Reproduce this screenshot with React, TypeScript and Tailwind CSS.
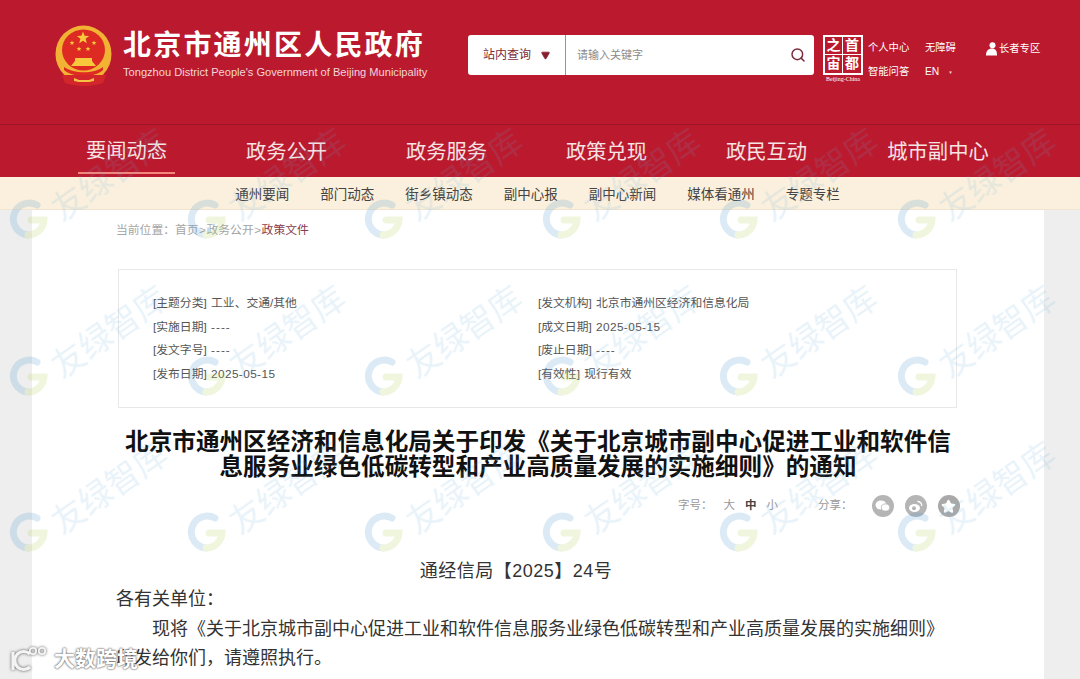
import { Search, Triangle, Star } from "lucide-react";

const FONT = "font-['Liberation_Sans','Noto_Sans_CJK_SC',sans-serif]";

const mainNav = ["要闻动态", "政务公开", "政务服务", "政策兑现", "政民互动", "城市副中心"];
const subNav = ["通州要闻", "部门动态", "街乡镇动态", "副中心报", "副中心新闻", "媒体看通州", "专题专栏"];

const metaLeft = [
  ["[主题分类]", "工业、交通/其他"],
  ["[实施日期]", "----"],
  ["[发文字号]", "----"],
  ["[发布日期]", "2025-05-15"],
];
const metaRight = [
  ["[发文机构]", "北京市通州区经济和信息化局"],
  ["[成文日期]", "2025-05-15"],
  ["[废止日期]", "----"],
  ["[有效性]", "现行有效"],
];

const markCols = [7, 185, 362, 540, 717, 895];
const markRows = [198, 355, 511];

function SmallStar({ x, y, r = 2.6 }: { x: number; y: number; r?: number }) {
  const pts = Array.from({ length: 10 }, (_, i) => {
    const a = (Math.PI / 5) * i - Math.PI / 2;
    const d = i % 2 === 0 ? r : r * 0.42;
    return `${x + d * Math.cos(a)},${y + d * Math.sin(a)}`;
  }).join(" ");
  return <polygon points={pts} fill="#f8c83c" />;
}

function Emblem() {
  return (
    <svg width="58" height="62" viewBox="0 0 58 62">
      <path d="M8 46h42l-3 12q-18 6-36 0z" fill="#d3262a" />
      <ellipse cx="28.5" cy="29" rx="28" ry="28.5" fill="#f2b233" />
      <ellipse cx="28.5" cy="25" rx="21.5" ry="20.5" fill="#dd2a22" />
      <SmallStar x={28} y={13} r={6.5} />
      <SmallStar x={17} y={18} />
      <SmallStar x={39} y={18} />
      <SmallStar x={24} y={24} />
      <SmallStar x={33} y={24} />
      <path d="M20 33h17v3l4 5H16l4-5z" fill="#f8c83c" />
      <path d="M9 42c10 7 30 7 39 0v3c-9 8-29 8-39 0z" fill="#dd2a22" />
      <path d="M7 50h44l-3 8q-19 6-38 0z" fill="#d3262a" />
      <path d="M19 53l5 2h10l5-2v3l-5 1H24l-5-1z" fill="#f6c244" />
    </svg>
  );
}

function Watermark({ x, y }: { x: number; y: number }) {
  return (
    <div className="absolute" style={{ left: x, top: y }}>
      <svg width="42" height="42" viewBox="0 0 42 42" fill="none" className="opacity-20 blur-[0.5px]">
        <path d="M30 7A16 16 0 1 0 21 37" stroke="#4f9cd0" strokeWidth="7" strokeLinecap="round" />
        <path d="M21 37A16 16 0 0 0 37 22H24" stroke="#b7d35c" strokeWidth="7" strokeLinecap="round" />
      </svg>
      <span className="absolute left-[36px] top-[-45px] w-[140px] origin-center -rotate-[35deg] text-[33px] leading-[40px] whitespace-nowrap text-[#5fa8d8] opacity-[0.14] blur-[0.3px]">
        友绿智库
      </span>
    </div>
  );
}

function MetaColumn({ rows }: { rows: string[][] }) {
  return (
    <div className="flex flex-col gap-[5.5px]">
      {rows.map(([label, value]) => (
        <p key={label} className="text-[11.8px] leading-[18px] text-[#555]">
          {label}{" "}
          <span className={`ml-[1px] ${value === "----" ? "tracking-[1px]" : /^\d/.test(value) ? "tracking-[0.4px]" : ""}`}>
            {value}
          </span>
        </p>
      ))}
    </div>
  );
}

export default function App() {
  return (
    <div className={`${FONT} relative h-[679px] w-[1080px] overflow-hidden bg-[#eeeeee]`}>
      <header className="flex h-[125px] items-start border-b border-[#9c1526] bg-[#bb1a2e]">
        <div className="ml-[55px] mt-[25px]">
          <Emblem />
        </div>
        <div className="ml-[10px] mt-[29px] w-[320px] text-white">
          <h1 className="text-[28px] font-bold leading-[34px] tracking-[2.2px] whitespace-nowrap">北京市通州区人民政府</h1>
          <p className="mt-[2px] text-[11.1px] leading-[14px] whitespace-nowrap text-[#f2d5d8]">
            Tongzhou District People's Government of Beijing Municipality
          </p>
        </div>
        <div className="ml-[25px] mt-[35px] flex h-[40px] w-[346px] items-center rounded-[3px] bg-white">
          <div className="flex h-full w-[98px] items-center border-r border-[#a98a90] pl-[15px]">
            <span className="text-[12px] text-[#7a2a3a]">站内查询</span>
            <Triangle className="ml-[10px] size-[9px] rotate-180 fill-[#8a1c30] text-[#8a1c30]" />
          </div>
          <span className="ml-[11px] flex-1 text-[11px] text-[#8b8b8b]">请输入关键字</span>
          <Search className="mr-[8px] size-[16px] text-[#7a2a3a]" strokeWidth={2.2} />
        </div>
        <div className="ml-[9px] mt-[35px] flex w-[40px] flex-col items-center">
          <div className="grid size-[40px] grid-cols-2 grid-rows-2 border-2 border-white font-['Liberation_Serif','Noto_Sans_CJK_SC',serif] text-[14px] leading-none font-bold text-white">
            <span className="flex items-center justify-center border-r border-b border-white">之</span>
            <span className="flex items-center justify-center border-b border-white">首</span>
            <span className="flex items-center justify-center border-r border-white">宙</span>
            <span className="flex items-center justify-center">都</span>
          </div>
          <span className="font-['Liberation_Serif',serif] text-[6px] leading-[8px] whitespace-nowrap text-white">Beijing-China</span>
        </div>
        <div className="ml-[5px] mt-[42px] grid grid-cols-[57px_60px_auto] gap-y-[10px] text-[10.3px] leading-[12px] text-white">
          <span>个人中心</span>
          <span>无障碍</span>
          <span className="flex items-center gap-[1px]">
            <svg width="13" height="14" viewBox="0 0 13 14" fill="white">
              <circle cx="7.5" cy="3.2" r="3" />
              <path d="M1 13.5c0-5 2.500-7 6-7s5 2 5 7z" />
            </svg>
            长者专区
          </span>
          <span>智能问答</span>
          <span className="flex items-center gap-[10px]">
            EN <Triangle className="size-[3px] rotate-180 fill-[#ecc] text-[#ecc]" />
          </span>
        </div>
      </header>

      <nav className="flex h-[52px] items-start gap-[63px] bg-[#bb1a2e] pl-[78px] text-[20.3px] text-[#f6e3e3]">
        {mainNav.map((item, i) => (
          <div
            key={item}
            className={`flex h-[49px] items-center justify-center pt-[5px] ${
              i === 0 ? "w-[97px] border-b-2 border-[#f4877a]" : i === 5 ? "w-[120px]" : "w-[97px]"
            }`}
          >
            {item}
          </div>
        ))}
      </nav>

      <div className="flex h-[33px] items-center justify-center gap-[31px] border-b border-[#f1e5d0] bg-[#fbf0dd] pr-[5px] pt-[5px] text-[13.5px] text-[#444]">
        {subNav.map((item) => (
          <span key={item}>{item}</span>
        ))}
      </div>

      <main className="ml-[32px] h-[469px] w-[1012px] bg-white">
        <div className="pl-[84px] pt-[12px] text-[11.8px] leading-[16px] text-[#a5a5a5]">
          当前位置：首页<span className="px-[0.5px]">&gt;</span>政务公开<span className="px-[0.5px]">&gt;</span>
          <span className="text-[#8a3a4d]">政策文件</span>
        </div>

        <section className="ml-[86px] mt-[31px] flex h-[139px] w-[839px] border border-[#e8e8e8] pl-[34px] pt-[24px]">
          <div className="w-[385px]">
            <MetaColumn rows={metaLeft} />
          </div>
          <MetaColumn rows={metaRight} />
        </section>

        <h2 className="mx-auto mt-[22px] w-[860px] text-center text-[23.6px] leading-[25px] font-bold text-[#111]">
          北京市通州区经济和信息化局关于印发《关于北京城市副中心促进工业和软件信
          <br />
          息服务业绿色低碳转型和产业高质量发展的实施细则》的通知
        </h2>

        <div className="mt-[13px] flex h-[26px] items-center pl-[646px] text-[11.5px] text-[#999]">
          <span>字号：</span>
          <span className="ml-[11px]">大</span>
          <span className="ml-[10px] font-bold text-[#444]">中</span>
          <span className="ml-[10px]">小</span>
          <span className="ml-[40px]">分享：</span>
          <div className="ml-[19px] flex gap-[11px]">
            <span className="flex size-[22px] items-center justify-center rounded-full bg-[#b5b5b5]">
              <svg width="15" height="12" viewBox="0 0 15 12" fill="white">
                <ellipse cx="6" cy="5" rx="5.5" ry="4.6" />
                <ellipse cx="10.5" cy="7.500" rx="4.2" ry="3.600" stroke="#b5b5b5" strokeWidth="0.8" />
              </svg>
            </span>
            <span className="flex size-[22px] items-center justify-center rounded-full bg-[#b5b5b5]">
              <svg width="15" height="13" viewBox="0 0 15 13" fill="none">
                <ellipse cx="6.5" cy="8" rx="5.5" ry="4" fill="white" />
                <circle cx="6" cy="8.3" r="2" fill="#b5b5b5" />
                <path d="M9.5 1.5a4 4 0 0 1 4.200 4.500" stroke="white" strokeWidth="1.3" />
              </svg>
            </span>
            <span className="flex size-[22px] items-center justify-center rounded-full bg-[#a9a9a9]">
              <Star className="size-[15px] fill-white text-white" />
            </span>
          </div>
        </div>

        <div className="mt-[37px] w-[800px] ml-[84px] text-[18px] leading-[30px] text-[#333]">
          <p className="text-center tracking-[0.5px]">通经信局【2025】24号</p>
          <p className="-mt-[2px]">各有关单位：</p>
          <p className="whitespace-nowrap pl-[36px]">现将《关于北京城市副中心促进工业和软件信息服务业绿色低碳转型和产业高质量发展的实施细则》</p>
          <p className="-mt-[1px]">印发给你们，请遵照执行。</p>
        </div>
      </main>

      {markRows.map((y) =>
        markCols.map((x) => <Watermark key={`${x}-${y}`} x={x} y={y} />)
      )}

      <div className="absolute bottom-[7px] left-[10px] flex items-center gap-[6px] text-white">
        <svg width="38" height="26" viewBox="0 0 38 26" fill="none" stroke="#f4f4f4" strokeWidth="3.2" className="drop-shadow-[0_0_1.5px_#555]">
          <path d="M3 6v18" />
          <path d="M20 8a9 9 0 1 0 0 13" />
          <circle cx="23" cy="5" r="3.200" strokeWidth="1.8" />
          <circle cx="32" cy="5" r="3.200" strokeWidth="1.8" />
        </svg>
        <span className="text-[21px] leading-[26px] font-bold [text-shadow:0_0_2px_#666,0_0_2px_#666]">大数跨境</span>
      </div>
    </div>
  );
}
